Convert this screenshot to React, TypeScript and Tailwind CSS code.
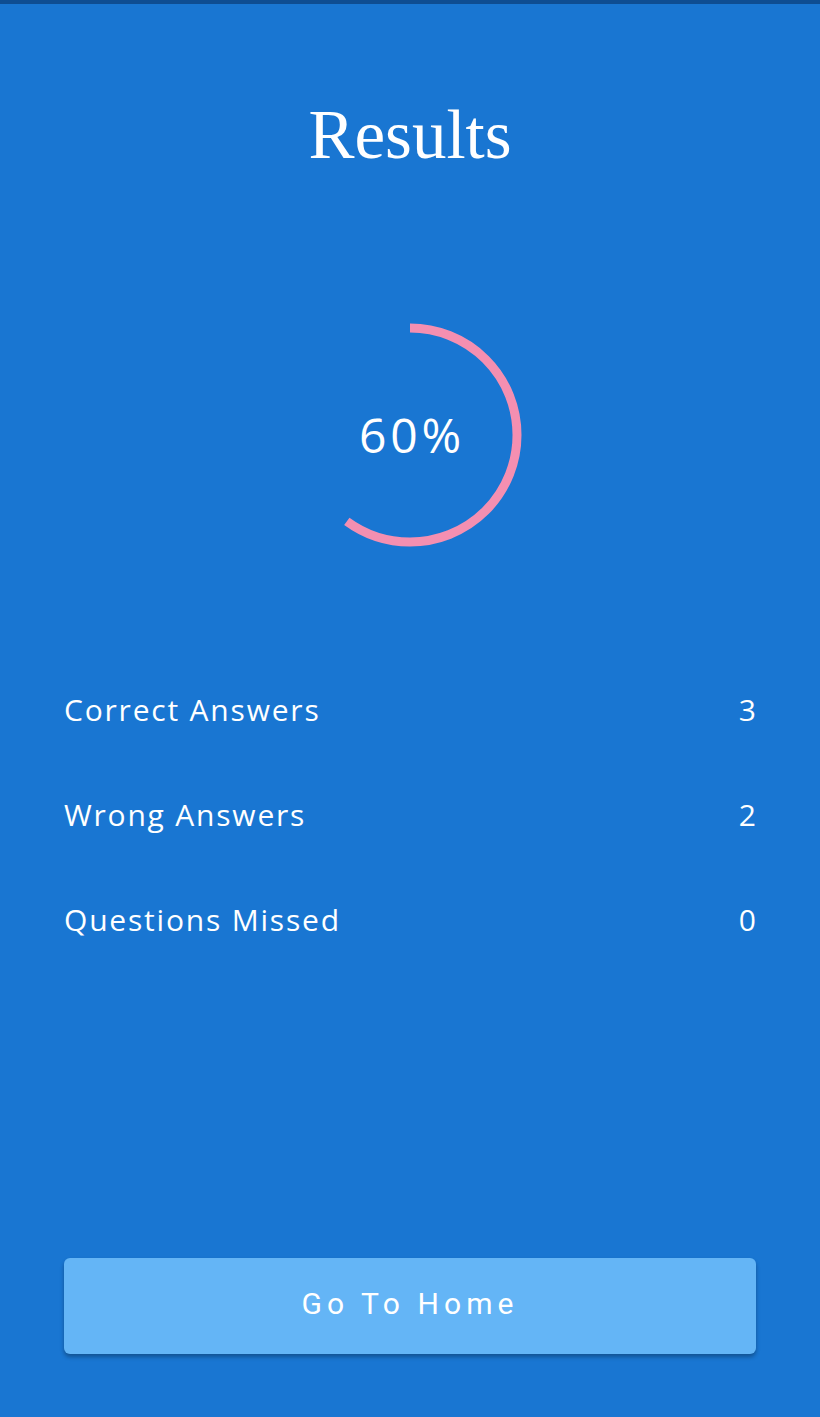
const stats = [
  { label: "Correct Answers", value: 3 },
  { label: "Wrong Answers", value: 2 },
  { label: "Questions Missed", value: 0 },
];

function ProgressRing({ percent }: { percent: number }) {
  const r = 107;
  const c = 2 * Math.PI * r;
  return (
    <div className="relative w-[240px] h-[240px]">
      <svg width="240" height="240" viewBox="0 0 240 240" className="-rotate-90">
        <circle
          cx="120"
          cy="120"
          r={r}
          fill="none"
          stroke="#f48fb1"
          strokeWidth="9"
          strokeDasharray={`${(c * percent) / 100} ${c}`}
        />
      </svg>
      <div className="absolute inset-0 flex items-center justify-center pl-[4px] text-white text-[48px] leading-none tracking-[0.08em] font-['Open_Sans',sans-serif]">
        {percent}%
      </div>
    </div>
  );
}

export default function App() {
  return (
    <div className="min-h-screen flex flex-col bg-[#1976d2] text-white">
      <div className="h-[4px] bg-[#0e4d92]" />

      <h1 className="mt-[97px] text-center text-[69px] leading-none font-['Liberation_Serif',serif]">
        Results
      </h1>

      <div className="mt-[145px] flex justify-center">
        <ProgressRing percent={60} />
      </div>

      {/* Score breakdown */}
      <div className="mt-[102px] px-[64px] font-['Open_Sans',sans-serif]">
        {stats.map((s) => (
          <div key={s.label} className="h-[105px] flex items-center justify-between text-[30px] leading-none tracking-[0.06em]">
            <span>{s.label}</span>
            <span className="tracking-normal">{s.value}</span>
          </div>
        ))}
      </div>

      <div className="mt-auto mb-[63px] px-[64px]">
        <button className="w-full h-[96px] pb-[5px] rounded-md bg-[#64b5f6] shadow-[0_3px_4px_rgba(0,0,0,0.3)] text-white text-[30px] tracking-[0.17em] font-['Roboto',sans-serif]">
          Go To Home
        </button>
      </div>
    </div>
  );
}
